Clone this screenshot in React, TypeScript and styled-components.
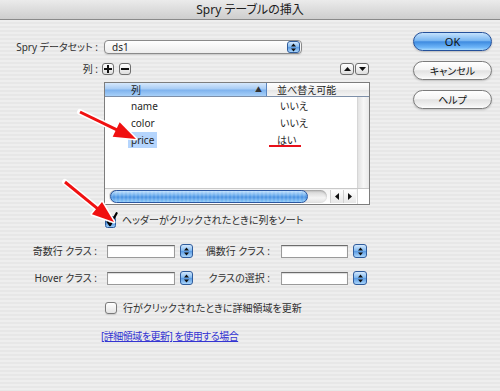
import styled, { createGlobalStyle } from "styled-components";

const FONT = `"Noto Sans", "Noto Sans CJK JP", sans-serif`;

const GlobalStyle = createGlobalStyle`
  html, body {
    margin: 0;
    padding: 0;
  }
  body {
    font-family: ${FONT};
  }
`;

const Window = styled.div`
  position: relative;
  width: 500px;
  height: 391px;
  overflow: hidden;
  display: flex;
  flex-direction: column;
  background: repeating-linear-gradient(
    to bottom,
    #eeeeee 0px,
    #eeeeee 2px,
    #e7e7e7 2px,
    #e7e7e7 4px
  );
  font-family: ${FONT};
  font-size: 10px;
  font-feature-settings: "palt";
  color: #262626;
`;

const TitleBar = styled.div`
  height: 19px;
  border-bottom: 1px solid #8a8a8a;
  background: linear-gradient(#ebebeb, #cecece);
  display: flex;
  align-items: center;
  justify-content: center;
  font-size: 12px;
  line-height: 1;
  color: #202020;
`;

const Body = styled.div`
  display: flex;
  flex: 1;
`;

const Form = styled.div`
  width: 370px;
  display: flex;
  flex-direction: column;
`;

const Row = styled.div<{ $top: number; $h: number; $left?: number }>`
  display: flex;
  align-items: center;
  margin-top: ${(p) => p.$top}px;
  margin-left: ${(p) => p.$left ?? 0}px;
  height: ${(p) => p.$h}px;
`;

const Label = styled.span<{ $w: number; $gap: number }>`
  width: ${(p) => p.$w}px;
  margin-right: ${(p) => p.$gap}px;
  text-align: right;
  white-space: nowrap;
  line-height: 1;
  color: #303030;
`;

const Select = styled.div`
  width: 198px;
  height: 14px;
  box-sizing: border-box;
  border: 1px solid #8a8a8a;
  border-radius: 4px;
  background: linear-gradient(#ffffff, #ededed);
  box-shadow: 0 1px 1px rgba(0, 0, 0, 0.12);
  display: flex;
  align-items: center;
  justify-content: space-between;
  padding: 0 1px 0 7px;
  line-height: 1;
`;

const Stepper = styled.div<{ $w: number; $h: number }>`
  width: ${(p) => p.$w}px;
  height: ${(p) => p.$h}px;
  box-sizing: border-box;
  border: 1px solid #2f5c9c;
  border-radius: 3px;
  background: linear-gradient(#d3e8fd 0%, #86bcf1 45%, #5a9ae2 52%, #a9d5fb 100%);
  display: flex;
  align-items: center;
  justify-content: center;
`;

const SquareButton = styled.div<{ $w: number }>`
  width: ${(p) => p.$w}px;
  height: 12px;
  box-sizing: border-box;
  border: 1px solid #6f6f6f;
  border-radius: 3px;
  background: linear-gradient(#ffffff, #dedede);
  display: flex;
  align-items: center;
  justify-content: center;
`;

const Spacer = styled.div<{ $w?: number }>`
  flex: ${(p) => (p.$w ? "none" : 1)};
  width: ${(p) => p.$w ?? 0}px;
`;

const ListBox = styled.div`
  margin-top: 7px;
  margin-left: 104px;
  width: 266px;
  height: 123px;
  box-sizing: border-box;
  border: 1px solid #7d7d7d;
  background: #ffffff;
  display: grid;
  grid-template-rows: 14px 1fr 16px;
`;

const HeaderRow = styled.div`
  display: grid;
  grid-template-columns: 162px 1fr;
  border-bottom: 1px solid #7d8fa8;
`;

const HeaderCell = styled.div<{ $active?: boolean }>`
  display: flex;
  align-items: center;
  padding-left: ${(p) => (p.$active ? 26 : 10)}px;
  padding-right: 4px;
  line-height: 1;
  background: ${(p) =>
    p.$active
      ? "linear-gradient(#d6e8fc 0%, #a9cdf5 45%, #7fb3ee 55%, #a8d0f8 100%)"
      : "linear-gradient(#ffffff 0%, #f3f3f3 50%, #e6e6e6 55%, #f4f4f4 100%)"};
  border-right: ${(p) => (p.$active ? "1px solid #5b86c0" : "none")};
`;

const SortMark = styled.span`
  margin-left: auto;
  font-size: 7px;
  color: #333;
`;

const ListMain = styled.div`
  display: grid;
  grid-template-columns: 1fr 12px;
`;

const Rows = styled.div`
  display: flex;
  flex-direction: column;
`;

const DataRow = styled.div`
  display: grid;
  grid-template-columns: 162px 1fr;
  height: 17px;
  align-items: center;
`;

const NameCell = styled.div`
  padding-left: 23px;
`;

const ValueCell = styled.div`
  padding-left: 10px;
`;

const CellText = styled.span<{ $selected?: boolean }>`
  display: inline-block;
  line-height: 12px;
  padding: 2px 3px;
  background: ${(p) => (p.$selected ? "#b5d5fd" : "transparent")};
`;

const Marked = styled.span`
  position: relative;
  display: inline-block;
  line-height: 12px;
  &::after {
    content: "";
    position: absolute;
    left: -8px;
    right: -5px;
    bottom: -1px;
    height: 2px;
    background: #e8101a;
  }
`;

const VTrack = styled.div`
  border-left: 1px solid #d6d6d6;
  background: linear-gradient(to right, #e2e2e2, #f7f7f7 50%, #e9e9e9);
`;

const HScrollRow = styled.div`
  display: grid;
  grid-template-columns: 1fr 12px;
  border-top: 1px solid #c9c9c9;
`;

const HScroll = styled.div`
  display: flex;
  align-items: center;
  background: linear-gradient(#f4f4f4, #ffffff);
`;

const Track = styled.div`
  margin-left: 4px;
  width: 218px;
  height: 13px;
  box-sizing: border-box;
  border-radius: 7px;
  background: linear-gradient(#cfcfcf, #f4f4f4 60%, #e2e2e2);
  box-shadow: inset 0 1px 2px rgba(0, 0, 0, 0.25);
  display: flex;
  align-items: center;
  padding-left: 1px;
`;

const Thumb = styled.div`
  width: 198px;
  height: 13px;
  box-sizing: border-box;
  border: 1px solid #2a56a0;
  border-radius: 7px;
  background: repeating-linear-gradient(
      to right,
      rgba(255, 255, 255, 0.12) 0px,
      rgba(255, 255, 255, 0.12) 2px,
      rgba(0, 0, 0, 0) 2px,
      rgba(0, 0, 0, 0) 4px
    ),
    linear-gradient(#bfe0fd 0%, #6eaeee 40%, #4a92e2 55%, #8ecbfa 100%);
`;

const ArrowPair = styled.div`
  margin-left: 3px;
  display: flex;
  height: 13px;
`;

const ArrowCell = styled.div`
  width: 12px;
  display: flex;
  align-items: center;
  justify-content: center;
  border-left: 1px solid #d0d0d0;
  background: linear-gradient(#ffffff, #e6e6e6);
`;

const Corner = styled.div`
  background: #ffffff;
  border-left: 1px solid #d6d6d6;
`;

const CheckText = styled.span<{ $gap: number }>`
  margin-left: ${(p) => p.$gap}px;
  line-height: 1;
  white-space: nowrap;
  color: #303030;
`;

const EmptyBox = styled.div`
  width: 12px;
  height: 12px;
  box-sizing: border-box;
  border: 1px solid #7a7a7a;
  border-radius: 3px;
  background: linear-gradient(#ffffff, #e4e4e4);
  box-shadow: 0 1px 1px rgba(0, 0, 0, 0.12);
`;

const TextInput = styled.div<{ $w: number }>`
  width: ${(p) => p.$w}px;
  height: 13px;
  box-sizing: border-box;
  border: 1px solid #9a9a9a;
  border-top-color: #6c6c6c;
  background: #ffffff;
  box-shadow: inset 0 1px 1px rgba(0, 0, 0, 0.15);
  margin-right: 5px;
`;

const LinkText = styled.a`
  margin-top: 16px;
  margin-left: 101px;
  height: 12px;
  line-height: 12px;
  letter-spacing: -0.5px;
  color: #3434d2;
  text-decoration: underline;
  white-space: nowrap;
  cursor: pointer;
`;

const ButtonColumn = styled.div`
  margin-left: 43px;
  padding-top: 12px;
  display: flex;
  flex-direction: column;
  gap: 10px;
`;

const AquaButton = styled.div<{ $primary?: boolean }>`
  width: 79px;
  height: 19px;
  box-sizing: border-box;
  border-radius: 10px;
  display: flex;
  align-items: center;
  justify-content: center;
  line-height: 1;
  font-size: ${(p) => (p.$primary ? 11 : 10)}px;
  color: #111;
  border: 1px solid ${(p) => (p.$primary ? "#24509a" : "#7b7b7b")};
  background: ${(p) =>
    p.$primary
      ? "linear-gradient(#c4e2fd 0%, #79b6f1 45%, #3f8be0 52%, #6fb6f8 85%, #a8dafd 100%)"
      : "linear-gradient(#ffffff 0%, #f4f4f4 45%, #e2e2e2 52%, #f2f2f2 85%, #fdfdfd 100%)"};
  box-shadow: 0 1px 2px rgba(0, 0, 0, 0.2);
`;

const Overlay = styled.svg`
  position: absolute;
  left: 0;
  top: 0;
  pointer-events: none;
`;

const StepGlyph = () => (
  <svg width="5" height="9" viewBox="0 0 5 9">
    <path d="M0 3.6 L2.5 0.6 L5 3.6 Z M0 5.4 L2.5 8.4 L5 5.4 Z" fill="#111" />
  </svg>
);

const PlusGlyph = () => (
  <svg width="8" height="8" viewBox="0 0 8 8">
    <path d="M3 0 H5 V3 H8 V5 H5 V8 H3 V5 H0 V3 H3 Z" fill="#111" />
  </svg>
);

const MinusGlyph = () => (
  <svg width="8" height="8" viewBox="0 0 8 8">
    <rect x="0" y="3" width="8" height="2" fill="#111" />
  </svg>
);

const TriGlyph = ({ dir }: { dir: "up" | "down" | "left" | "right" }) => {
  const d = {
    up: "M0 5 L3.5 1 L7 5 Z",
    down: "M0 1 L3.5 5 L7 1 Z",
    left: "M5 0 L1 3.5 L5 7 Z",
    right: "M1 0 L5 3.5 L1 7 Z",
  }[dir];
  const small = dir === "left" || dir === "right";
  return (
    <svg width={small ? 6 : 7} height={small ? 7 : 6} viewBox={small ? "0 0 6 7" : "0 0 7 6"}>
      <path d={d} fill="#111" />
    </svg>
  );
};

const CheckedBox = () => (
  <svg width="15" height="16" viewBox="0 0 15 16">
    <defs>
      <linearGradient id="cbBlue" x1="0" y1="0" x2="0" y2="1">
        <stop offset="0" stopColor="#cfe6fd" />
        <stop offset="0.5" stopColor="#72acec" />
        <stop offset="0.55" stopColor="#4f92e0" />
        <stop offset="1" stopColor="#a6d4fb" />
      </linearGradient>
    </defs>
    <rect x="1.5" y="4.5" width="10" height="11" rx="2" fill="url(#cbBlue)" stroke="#2f5c9c" />
    <path d="M3.6 9.6 L6 13.2 L12.6 1.2" fill="none" stroke="#000" strokeWidth="2.2" strokeLinecap="round" strokeLinejoin="round" />
  </svg>
);

const RedArrow = ({ x1, y1, x2, y2 }: { x1: number; y1: number; x2: number; y2: number }) => {
  const dx = x2 - x1;
  const dy = y2 - y1;
  const len = Math.hypot(dx, dy);
  const ux = dx / len;
  const uy = dy / len;
  const head = 22;
  const half = 8;
  const bx = x2 - ux * head;
  const by = y2 - uy * head;
  const px = -uy;
  const py = ux;
  const pts = `${x2},${y2} ${bx + px * half},${by + py * half} ${bx - px * half},${by - py * half}`;
  const lx = bx + ux * 2;
  const ly = by + uy * 2;
  return (
    <g>
      <line x1={x1} y1={y1} x2={lx} y2={ly} stroke="#ffffff" strokeWidth="6" strokeLinecap="round" />
      <polygon points={pts} fill="#ffffff" stroke="#ffffff" strokeWidth="3" strokeLinejoin="round" />
      <line x1={x1} y1={y1} x2={lx} y2={ly} stroke="#f01010" strokeWidth="3" />
      <polygon points={pts} fill="#f01010" />
    </g>
  );
};

const rows = [
  { name: "name", sortable: "いいえ" },
  { name: "color", sortable: "いいえ" },
  { name: "price", sortable: "はい", selected: true },
];

export default function App() {
  return (
    <>
      <GlobalStyle />
      <Window>
        <TitleBar>Spry テーブルの挿入</TitleBar>
        <Body>
          <Form>
            <Row $top={20} $h={14}>
              <Label $w={98} $gap={6}>
                Spry データセット :
              </Label>
              <Select>
                <span>ds1</span>
                <Stepper $w={13} $h={12}>
                  <StepGlyph />
                </Stepper>
              </Select>
            </Row>

            <Row $top={9} $h={12}>
              <Label $w={98} $gap={4}>
                列 :
              </Label>
              <SquareButton $w={12}>
                <PlusGlyph />
              </SquareButton>
              <Spacer $w={5} />
              <SquareButton $w={12}>
                <MinusGlyph />
              </SquareButton>
              <Spacer />
              <SquareButton $w={14}>
                <TriGlyph dir="up" />
              </SquareButton>
              <Spacer $w={1} />
              <SquareButton $w={14}>
                <TriGlyph dir="down" />
              </SquareButton>
              <Spacer $w={1} />
            </Row>

            <ListBox>
              <HeaderRow>
                <HeaderCell $active>
                  列<SortMark>▲</SortMark>
                </HeaderCell>
                <HeaderCell>並べ替え可能</HeaderCell>
              </HeaderRow>
              <ListMain>
                <Rows>
                  {rows.map((r) => (
                    <DataRow key={r.name}>
                      <NameCell>
                        <CellText $selected={r.selected}>{r.name}</CellText>
                      </NameCell>
                      <ValueCell>
                        {r.selected ? <Marked>{r.sortable}</Marked> : <CellText>{r.sortable}</CellText>}
                      </ValueCell>
                    </DataRow>
                  ))}
                </Rows>
                <VTrack />
              </ListMain>
              <HScrollRow>
                <HScroll>
                  <Track>
                    <Thumb />
                  </Track>
                  <ArrowPair>
                    <ArrowCell>
                      <TriGlyph dir="left" />
                    </ArrowCell>
                    <ArrowCell>
                      <TriGlyph dir="right" />
                    </ArrowCell>
                  </ArrowPair>
                </HScroll>
                <Corner />
              </HScrollRow>
            </ListBox>

            <Row $top={7} $h={16} $left={104}>
              <CheckedBox />
              <CheckText $gap={3}>ヘッダーがクリックされたときに列をソート</CheckText>
            </Row>

            <Row $top={16} $h={14}>
              <Label $w={97} $gap={10}>
                奇数行 クラス :
              </Label>
              <TextInput $w={68} />
              <Stepper $w={13} $h={14}>
                <StepGlyph />
              </Stepper>
              <Label $w={77} $gap={11}>
                偶数行 クラス :
              </Label>
              <TextInput $w={67} />
              <Stepper $w={14} $h={14}>
                <StepGlyph />
              </Stepper>
            </Row>

            <Row $top={13} $h={14}>
              <Label $w={97} $gap={10}>
                Hover クラス :
              </Label>
              <TextInput $w={68} />
              <Stepper $w={13} $h={14}>
                <StepGlyph />
              </Stepper>
              <Label $w={77} $gap={11}>
                クラスの選択 :
              </Label>
              <TextInput $w={67} />
              <Stepper $w={14} $h={14}>
                <StepGlyph />
              </Stepper>
            </Row>

            <Row $top={16} $h={13} $left={105}>
              <EmptyBox />
              <CheckText $gap={6}>行がクリックされたときに詳細領域を更新</CheckText>
            </Row>

            <LinkText>[詳細領域を更新] を使用する場合</LinkText>
          </Form>

          <ButtonColumn>
            <AquaButton $primary>OK</AquaButton>
            <AquaButton>キャンセル</AquaButton>
            <AquaButton>ヘルプ</AquaButton>
          </ButtonColumn>
        </Body>

        <Overlay width="500" height="391" viewBox="0 0 500 391">
          <RedArrow x1={80} y1={112} x2={136} y2={139} />
          <RedArrow x1={65} y1={182} x2={114} y2={222} />
        </Overlay>
      </Window>
    </>
  );
}
